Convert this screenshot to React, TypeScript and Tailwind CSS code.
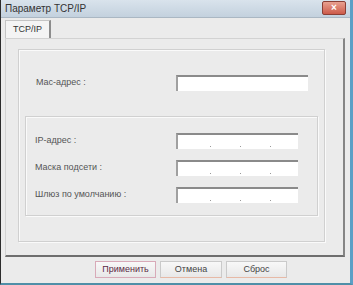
import React from 'react';

const font = { fontFamily: '"Liberation Sans", Arial, sans-serif' };

const IpInput: React.FC = () => (
  <div className="relative w-[122px] h-[16px] bg-white border-t-2 border-l-2 border-t-[#8a8a8a] border-l-[#a0a0a0]">
    <div className="absolute bottom-[2px] left-0 right-0 flex justify-center gap-[29px] pl-[4px]">
      <span className="w-[1px] h-[1px] bg-[#9a9a9a]" />
      <span className="w-[1px] h-[1px] bg-[#9a9a9a]" />
      <span className="w-[1px] h-[1px] bg-[#9a9a9a]" />
    </div>
  </div>
);

const Row: React.FC<{ label: string; inset: string; children: React.ReactNode }> = ({ label, inset, children }) => (
  <div className="flex items-center h-[16px]">
    <span className={`${inset} text-[9px] text-[#555]`}>{label}</span>
    {children}
  </div>
);

const Button: React.FC<{ label: string; focus?: boolean }> = ({ label, focus }) => (
  <div
    className={`flex items-center justify-center h-[17px] text-[9px] bg-gradient-to-b from-[#f8f8f8] to-[#e8e8e8] border ${
      focus ? 'border-[#d8aab8] text-[#5a2a44]' : 'border-[#cacaca] border-b-[#e7b9a6] text-[#444]'
    }`}
  >
    {label}
  </div>
);

export default function App() {
  return (
    <div className="w-[353px] h-[285px] bg-[#ebebeb] border-l border-l-[#2c2c2c] border-r-[3px] border-r-[#5b9fc6] border-b-2 border-b-[#4f8fa8] flex flex-col" style={font}>
      {/* title bar */}
      <div className="h-[18px] flex items-center justify-between pl-[4px] pr-[4px] bg-gradient-to-b from-[#d9e3ec] to-[#c3d1de] border-b border-[#aab7c3]">
        <span className="text-[10px] text-[#333]">Параметр TCP/IP</span>
        <div className="w-[24px] h-[14px] mb-[2px] flex items-center justify-center rounded-[2px] border border-[#8a3f36] bg-gradient-to-b from-[#e8a090] to-[#cc5a4a] text-white text-[10px] font-bold leading-none">
          ×
        </div>
      </div>

      {/* tabs */}
      <div className="flex pl-[4px] pt-[2px]">
        <div className="h-[18px] px-[7px] flex items-center text-[9px] text-[#333] bg-[#f4f4f4] border border-b-0 border-[#c4c4c4] border-r-2 border-r-[#8c8c8c]">
          TCP/IP
        </div>
      </div>

      {/* panel */}
      <div className="ml-[4px] w-[340px] h-[219px] bg-[#ebebeb] border border-[#d2d2d2] border-r-2 border-r-[#858585] border-b-2 border-b-[#6e6e6e] pl-[12px] pt-[10px]">
        <div className="w-[307px] h-[193px] border border-[#d0d0d0] shadow-[1px_1px_0_#fafafa,inset_1px_1px_0_#fafafa] pt-[25px]">
          <Row label="Мас-адрес :" inset="w-[157px] pl-[17px]">
            <div className="w-[132px] h-[16px] bg-white border-t-2 border-l-2 border-t-[#8a8a8a] border-l-[#a0a0a0]" />
          </Row>
          <div className="ml-[6px] mt-[25px] w-[293px] h-[100px] border border-[#d0d0d0] shadow-[1px_1px_0_#fafafa,inset_1px_1px_0_#fafafa] pt-[16px] flex flex-col gap-[11px]">
            <Row label="IP-адрес :" inset="w-[150px] pl-[9px]">
              <IpInput />
            </Row>
            <Row label="Маска подсети :" inset="w-[150px] pl-[9px]">
              <IpInput />
            </Row>
            <Row label="Шлюз по умолчанию :" inset="w-[150px] pl-[9px]">
              <IpInput />
            </Row>
          </div>
        </div>
      </div>

      {/* buttons */}
      <div className="flex gap-[4px] pl-[94px] pt-[4px]">
        <div className="w-[61px]"><Button label="Применить" focus /></div>
        <div className="w-[62px]"><Button label="Отмена" /></div>
        <div className="w-[61px]"><Button label="Сброс" /></div>
      </div>
    </div>
  );
}
